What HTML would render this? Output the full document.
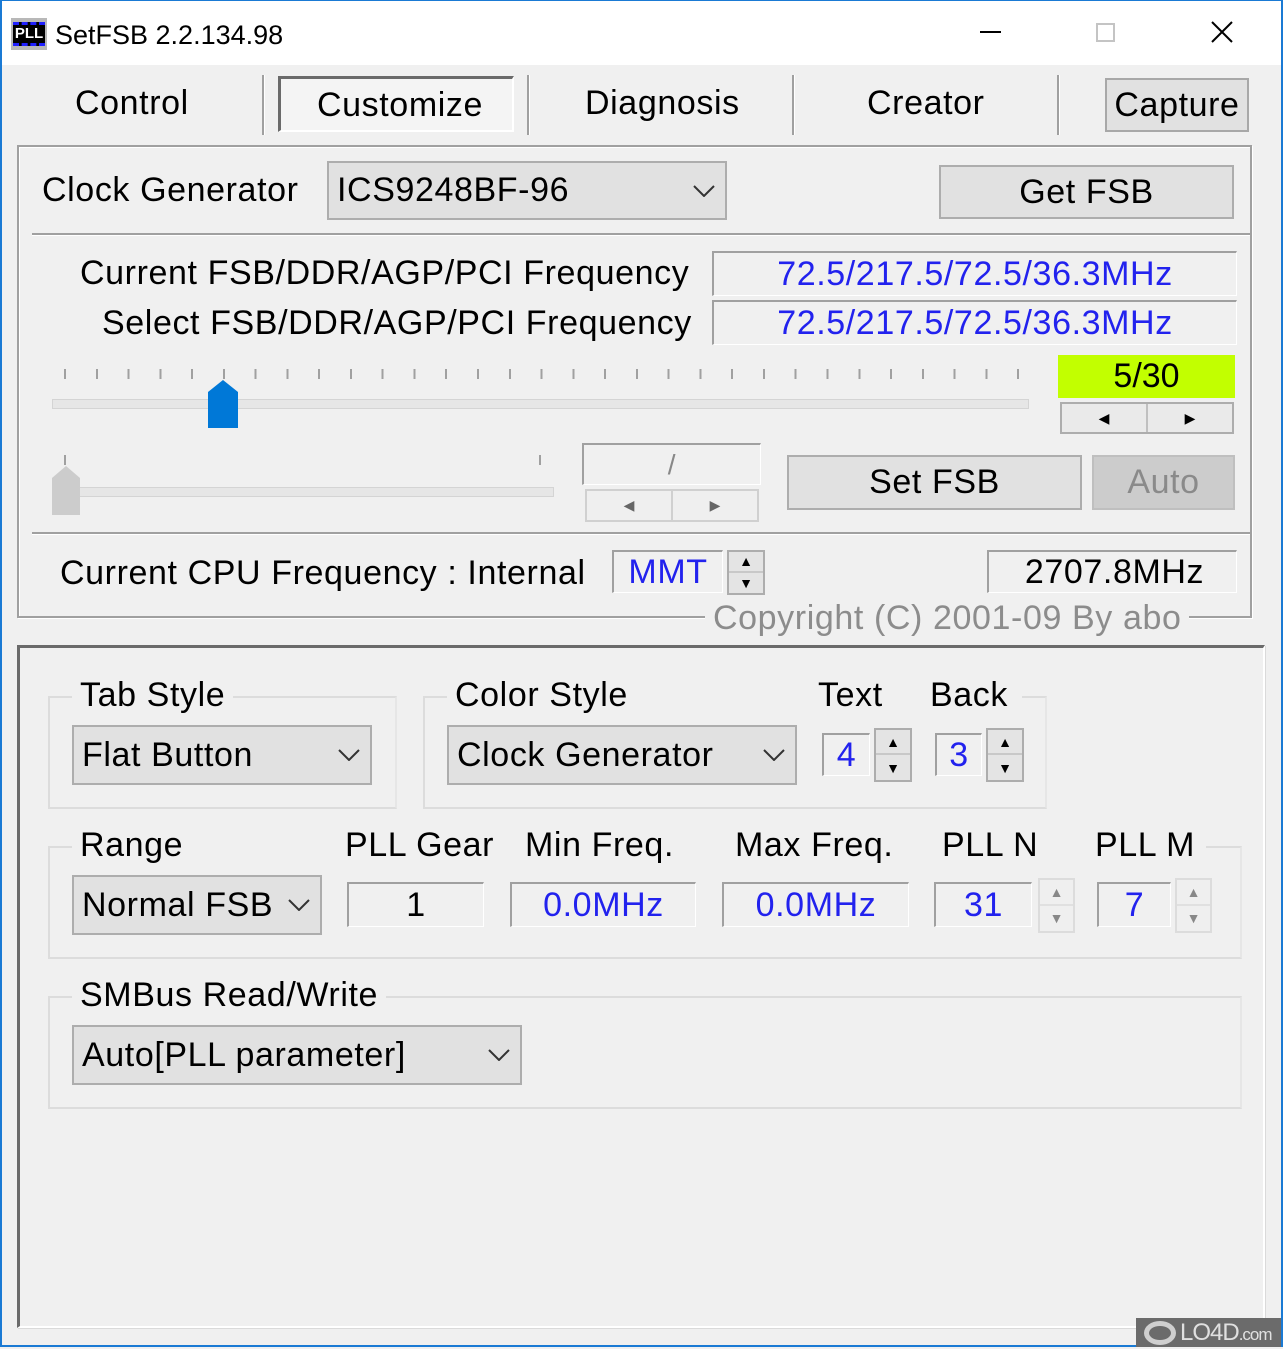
<!DOCTYPE html>
<html><head><meta charset="utf-8"><style>
*{margin:0;padding:0;box-sizing:border-box}
body{width:1283px;height:1347px;background:#f0f0f0;position:relative;overflow:hidden;font-family:"Liberation Sans",Arial,sans-serif;color:#000}
.a{position:absolute}
.t,.f,.cb,.btn,.lbl{letter-spacing:0.6px}
.t{position:absolute;font-size:34px;line-height:40px;white-space:nowrap}
.f{position:absolute;border-top:2px solid #a0a0a0;border-left:2px solid #a0a0a0;border-right:1px solid #fff;border-bottom:1px solid #fff;display:flex;align-items:center;justify-content:center;font-size:34px;background:#f0f0f0;white-space:nowrap}
.blue{color:#2222ee}
.cb{position:absolute;background:#e1e1e1;border:2px solid #adadad;font-size:34px;display:flex;align-items:center;padding-left:8px;white-space:nowrap}
.cb svg{position:absolute;right:10px;top:50%;margin-top:-6px}
.btn{position:absolute;background:#e1e1e1;border:2px solid #adadad;font-size:34px;display:flex;align-items:center;justify-content:center}
.grp{position:absolute;border:2px solid #dcdcdc;border-right-color:#e6e6e6}
.lbl{position:absolute;background:#f0f0f0;font-size:34px;line-height:40px;padding:0 8px;white-space:nowrap;height:40px}
.lbl span{position:absolute;top:0}
.sep{position:absolute;height:3px;border-top:2px solid #a0a0a0;border-bottom:1px solid #fff}
.vs{position:absolute;width:3px;border-left:2px solid #a0a0a0;border-right:1px solid #fff}
.sp{position:absolute;border:2px solid #adadad;background:#e8e8e8}
.sp div{height:50%;display:flex;align-items:center;justify-content:center;font-size:14px}
.sp div:first-child{border-bottom:2px solid #c8c8c8}
</style></head><body>
<div class="a" style="left:0;top:0;width:1283px;height:1347px;border:2px solid #1a7ad4;border-top-width:1px"></div>
<div class="a" style="left:2px;top:1px;width:1279px;height:64px;background:#fff"></div>
<div class="a" style="left:11px;top:18px;width:36px;height:32px;background:#b8b8b8"></div>
<div class="a" style="left:13px;top:22px;width:32px;height:24px;background:#000;border-top:3px dashed #2020ff;border-bottom:3px dashed #2020ff;color:#fff;font:bold 15px/18px 'Liberation Sans';text-align:center">PLL</div>
<div class="t" style="left:55px;top:15px;font-size:27px;letter-spacing:0">SetFSB 2.2.134.98</div>
<div class="a" style="left:980px;top:31px;width:21px;height:2px;background:#000"></div>
<div class="a" style="left:1096px;top:23px;width:19px;height:19px;border:2px solid #c4c4c4"></div>
<svg class="a" style="left:1211px;top:21px" width="22" height="22"><path d="M1 1L21 21M21 1L1 21" stroke="#000" stroke-width="2"/></svg>

<div class="t" style="left:75px;top:83px">Control</div>
<div class="vs" style="left:262px;top:75px;height:60px"></div>
<div class="a" style="left:278px;top:76px;width:236px;height:56px;border-top:3px solid #6a6a6a;border-left:3px solid #6a6a6a;border-right:2px solid #fff;border-bottom:2px solid #fff;background:#f4f4f4"></div>
<div class="t" style="left:317px;top:85px">Customize</div>
<div class="vs" style="left:527px;top:75px;height:60px"></div>
<div class="t" style="left:585px;top:83px">Diagnosis</div>
<div class="vs" style="left:792px;top:75px;height:60px"></div>
<div class="t" style="left:867px;top:83px">Creator</div>
<div class="vs" style="left:1057px;top:75px;height:60px"></div>
<div class="btn" style="left:1105px;top:78px;width:144px;height:54px;border-color:#a8a8a8">Capture</div>

<div class="a" style="left:17px;top:145px;width:1235px;height:473px;border:2px solid #a0a0a0;box-shadow:inset 1px 1px 0 #fff, 1px 1px 0 #fff"></div>
<div class="t" style="left:42px;top:170px">Clock Generator</div>
<div class="cb" style="left:327px;top:161px;width:400px;height:59px">ICS9248BF-96<svg width="22" height="12"><path d="M1 1L11 11L21 1" stroke="#333" stroke-width="2" fill="none"/></svg></div>
<div class="btn" style="left:939px;top:165px;width:295px;height:54px">Get FSB</div>
<div class="sep" style="left:32px;top:233px;width:1218px"></div>
<div class="t" style="left:80px;top:253px">Current FSB/DDR/AGP/PCI Frequency</div>
<div class="t" style="left:102px;top:303px">Select FSB/DDR/AGP/PCI Frequency</div>
<div class="f blue" style="left:712px;top:251px;width:525px;height:45px">72.5/217.5/72.5/36.3MHz</div>
<div class="f blue" style="left:712px;top:300px;width:525px;height:45px">72.5/217.5/72.5/36.3MHz</div>
<div class="a" style="left:64px;top:369px;width:960px;height:10px;background:repeating-linear-gradient(90deg,#a0a0a0 0 2px,transparent 2px 31.77px)"></div>
<div class="a" style="left:52px;top:399px;width:977px;height:10px;background:#e6e6e6;border:1px solid #d4d4d4"></div>
<svg class="a" style="left:208px;top:380px" width="30" height="48"><path d="M0 12L15 0L30 12V48H0Z" fill="#0078d7"/></svg>
<div class="a" style="left:1058px;top:355px;width:177px;height:43px;background:#c2ff00;font-size:34px;display:flex;align-items:center;justify-content:center"><span style="margin-left:0px">5/30</span></div>
<div class="sp" style="left:1060px;top:402px;width:174px;height:32px;display:flex;background:#eaeaea"><div style="flex:1;height:100%;border:none;border-right:2px solid #c0c0c0">&#9664;</div><div style="flex:1;height:100%;border:none">&#9654;</div></div>
<div class="a" style="left:64px;top:455px;width:2px;height:10px;background:#a0a0a0"></div>
<div class="a" style="left:539px;top:455px;width:2px;height:10px;background:#a0a0a0"></div>
<div class="a" style="left:52px;top:487px;width:502px;height:10px;background:#e6e6e6;border:1px solid #d4d4d4"></div>
<svg class="a" style="left:52px;top:466px" width="28" height="49"><path d="M0 12L14 0L28 12V49H0Z" fill="#cccccc"/></svg>
<div class="f" style="left:582px;top:443px;width:179px;height:42px;color:#888;font-size:28px">/</div>
<div class="sp" style="left:585px;top:489px;width:174px;height:33px;display:flex;border-color:#d0d0d0;background:#efefef;color:#666"><div style="flex:1;height:100%;border:none;border-right:2px solid #d0d0d0">&#9664;</div><div style="flex:1;height:100%;border:none">&#9654;</div></div>
<div class="btn" style="left:787px;top:455px;width:295px;height:55px">Set FSB</div>
<div class="btn" style="left:1092px;top:455px;width:143px;height:55px;background:#cccccc;border-color:#bfbfbf;color:#8a8a8a">Auto</div>
<div class="sep" style="left:32px;top:532px;width:1218px"></div>
<div class="t" style="left:60px;top:553px">Current CPU Frequency : Internal</div>
<div class="f blue" style="left:612px;top:550px;width:111px;height:43px">MMT</div>
<div class="sp" style="left:727px;top:550px;width:38px;height:45px;background:#e4e4e4"><div>&#9650;</div><div>&#9660;</div></div>
<div class="f" style="left:987px;top:550px;width:250px;height:43px"><span style="margin-left:4px">2707.8MHz</span></div>
<div class="t" style="left:705px;top:598px;color:#8c8c8c;background:#f0f0f0;padding:0 8px">Copyright (C) 2001-09 By abo</div>

<div class="a" style="left:17px;top:645px;width:1248px;height:683px;border-top:3px solid #6a6a6a;border-left:3px solid #6a6a6a;border-right:2px solid #fff;border-bottom:2px solid #fff;box-shadow:1px 1px 0 #dadada"></div>
<div class="grp" style="left:48px;top:696px;width:349px;height:113px"></div>
<div class="lbl" style="left:72px;top:675px">Tab Style</div>
<div class="cb" style="left:72px;top:725px;width:300px;height:60px">Flat Button<svg width="22" height="12"><path d="M1 1L11 11L21 1" stroke="#333" stroke-width="2" fill="none"/></svg></div>
<div class="grp" style="left:423px;top:696px;width:624px;height:113px"></div>
<div class="lbl" style="left:447px;top:675px;width:575px"><span style="left:8px">Color Style</span><span style="left:371px">Text</span><span style="left:483px">Back</span></div>
<div class="cb" style="left:447px;top:725px;width:350px;height:60px">Clock Generator<svg width="22" height="12"><path d="M1 1L11 11L21 1" stroke="#333" stroke-width="2" fill="none"/></svg></div>
<div class="f blue" style="left:822px;top:733px;width:48px;height:43px">4</div>
<div class="sp" style="left:874px;top:728px;width:38px;height:54px;background:#e4e4e4"><div>&#9650;</div><div>&#9660;</div></div>
<div class="f blue" style="left:935px;top:733px;width:47px;height:43px">3</div>
<div class="sp" style="left:986px;top:728px;width:38px;height:54px;background:#e4e4e4"><div>&#9650;</div><div>&#9660;</div></div>

<div class="grp" style="left:48px;top:846px;width:1194px;height:113px"></div>
<div class="lbl" style="left:72px;top:825px;width:1134px"><span style="left:8px">Range</span><span style="left:273px">PLL Gear</span><span style="left:453px">Min Freq.</span><span style="left:663px">Max Freq.</span><span style="left:870px">PLL N</span><span style="left:1023px">PLL M</span></div>
<div class="cb" style="left:72px;top:875px;width:250px;height:60px">Normal FSB<svg width="22" height="12"><path d="M1 1L11 11L21 1" stroke="#333" stroke-width="2" fill="none"/></svg></div>
<div class="f" style="left:347px;top:882px;width:137px;height:45px">1</div>
<div class="f blue" style="left:510px;top:882px;width:186px;height:45px">0.0MHz</div>
<div class="f blue" style="left:722px;top:882px;width:187px;height:45px">0.0MHz</div>
<div class="f blue" style="left:934px;top:882px;width:98px;height:45px">31</div>
<div class="sp" style="left:1038px;top:878px;width:37px;height:55px;border-color:#dcdcdc;background:#efefef;color:#888"><div style="border-color:#e0e0e0">&#9650;</div><div>&#9660;</div></div>
<div class="f blue" style="left:1097px;top:882px;width:74px;height:45px">7</div>
<div class="sp" style="left:1175px;top:878px;width:37px;height:55px;border-color:#dcdcdc;background:#efefef;color:#888"><div style="border-color:#e0e0e0">&#9650;</div><div>&#9660;</div></div>

<div class="grp" style="left:48px;top:996px;width:1194px;height:113px"></div>
<div class="lbl" style="left:72px;top:975px">SMBus Read/Write</div>
<div class="cb" style="left:72px;top:1025px;width:450px;height:60px">Auto[PLL parameter]<svg width="22" height="12"><path d="M1 1L11 11L21 1" stroke="#333" stroke-width="2" fill="none"/></svg></div>

<div class="a" style="left:1136px;top:1318px;width:145px;height:29px;background:#6b6b6b;color:#e0e0e0;font-size:24px;line-height:29px;padding-left:44px;letter-spacing:-1px">LO4D<span style="font-size:17px">.com</span></div>
<div class="a" style="left:1144px;top:1321px;width:32px;height:24px;border-radius:50%;border:5px solid #cfcfcf"></div>
</body></html>
